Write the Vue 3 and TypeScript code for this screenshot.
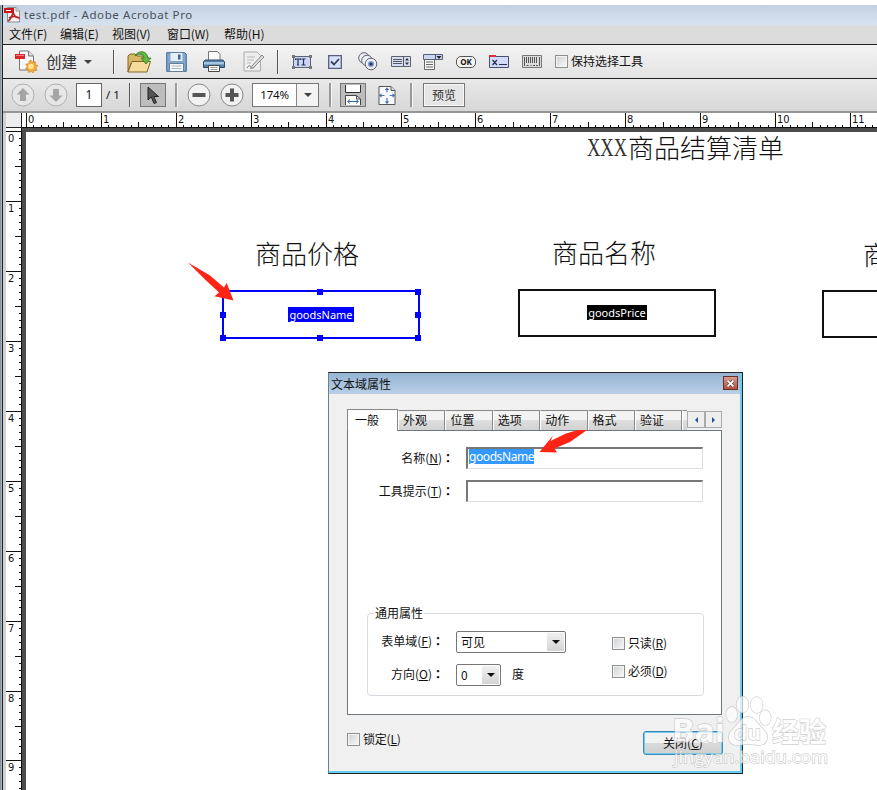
<script setup lang="ts">
interface Tick {
  pos: number
  kind: 'major' | 'half' | 'minor'
  label: string
}

function makeTicks(start: number, inch: number, limit: number): Tick[] {
  const list: Tick[] = []
  for (let i = 0; start + (i * inch) / 10 < limit; i++) {
    list.push({
      pos: Math.floor(start + (i * inch) / 10),
      kind: i % 10 === 0 ? 'major' : i % 5 === 0 ? 'half' : 'minor',
      label: i % 10 === 0 ? String(i / 10) : '',
    })
  }
  return list
}

const hTicks = makeTicks(4.5, 74.9, 855)
const vTicks = makeTicks(3.6, 69.93, 662)
const tickLength = { major: 15, half: 6, minor: 3 }

const menus = ['文件(F)', '编辑(E)', '视图(V)', '窗口(W)', '帮助(H)']
const tabs = ['一般', '外观', '位置', '选项', '动作', '格式', '验证']
const handles = [
  [97, 0], [195, 0],
  [0, 23], [195, 23],
  [0, 46], [97, 46], [195, 46],
]
</script>

<template>
  <div class="window">
    <div class="edge"></div>
    <div class="app">
      <header class="titlebar">
        <svg width="17" height="16" viewBox="0 0 17 16">
          <path d="M3.500 .5h8.500l3.500 3.500v11H3.500z" fill="#f7f2f2" stroke="#8b8b8b" />
          <path d="M12 .5V4h3.500" fill="#ddd" stroke="#999" />
          <path d="M0 1h10v5H0z" fill="#c9161d" />
          <path d="M4 14c3-2 5-6 5-11 0 5 3 8 7 8M5 11c3-2 7-2 10 0" fill="none" stroke="#b92028" stroke-width="1.600" />
          <path d="M2 3.500h5" stroke="#fff" />
        </svg>
        <span>test.pdf - Adobe Acrobat Pro</span>
      </header>
      <nav class="menubar">
        <span v-for="m in menus" :key="m">{{ m }}</span>
      </nav>

      <div class="toolbar main">
        <svg class="create-icon" width="24" height="23" viewBox="0 0 24 23">
          <path d="M4.500 1h9l5 5v14h-14z" fill="#f7f7f7" stroke="#777" />
          <path d="M13.500 1v5h5" fill="#ddd" stroke="#777" />
          <path d="M0 4h10v5H0z" fill="#d8262d" />
          <path d="M1 5h8v1H1z" fill="#ee8588" />
          <path d="M16 10l1.700 2.300 2.800-.6-.2 2.800 2.700 1.200-2 2 1 2.700-2.900.2-1.100 2.400-2-1.700-2.500 1.300-.3-2.800-2.700-.9 1.600-2.300-1.300-2.500 2.900-.4.500-2.700z" fill="#f3a93a" stroke="#c98328" stroke-width=".6" />
          <circle cx="16" cy="16.500" r="2.800" fill="#ffe59a" />
        </svg>
        <span class="create-text">创建</span>
        <i class="caret create-caret"></i>
        <i class="sep s1"></i>
        <svg class="open-icon" width="25" height="22" viewBox="0 0 25 22">
          <path d="M1 5l2-2h5l2 2h10v7H4L1 21z" fill="#d8b765" stroke="#806529" />
          <path d="M1 21L5 10.500h18.500L20 21z" fill="#f6dc9c" stroke="#806529" />
          <path d="M8 5C11-1 20-1 21 7h3l-5 6-5-6h3c0-4-5-5-9-2z" fill="#62b944" stroke="#32761d" stroke-width=".8" />
        </svg>
        <svg class="save-icon" width="21" height="20" viewBox="0 0 21 20">
          <path d="M.7.700h18l1.600 1.600v17H.7z" fill="#7ea7cf" stroke="#426994" />
          <path d="M4.500 1h12v8h-12z" fill="#e6eef6" />
          <path d="M12 2.500h2.500v5H12z" fill="#3f658d" />
          <path d="M3.500 11.500h14v8h-14z" fill="#f5f7f8" stroke="#658099" />
          <path d="M5.500 14h10M5.500 16.500h10" stroke="#aab8c3" />
        </svg>
        <svg class="print-icon" width="22" height="21" viewBox="0 0 22 21">
          <path d="M5.500 10V.5h9l2.500 3v6" fill="#fafafa" stroke="#777" />
          <path d="M2 9h18l1.500 2v5.500H.5V11z" fill="#5580aa" stroke="#304f6c" />
          <path d="M1 11h20v2.500H1z" fill="#a5c6e2" />
          <path d="M5.500 14.500h11v6h-11z" fill="#fff" stroke="#444" />
          <path d="M7.500 16.500h7M7.500 18.500h7" stroke="#999" />
        </svg>
        <svg class="sign-icon" width="22" height="21" viewBox="0 0 22 21">
          <path d="M1 1h13l3.500 3.500V20H1z" fill="#eee" stroke="#aaa" />
          <path d="M4 6h8M4 9h7M4 12h4" stroke="#bbb" />
          <path d="M4 17c2-3 3-3 4-1s3 1 4-1" fill="none" stroke="#777" />
          <path d="M8.500 15.500L19 4l2 2-10.500 10.500-3 1z" fill="#ddd" stroke="#8a8a8a" />
        </svg>
        <i class="sep s2"></i>
        <svg class="tf-icon" width="20" height="14" viewBox="0 0 20 14">
          <path d="M1.500 1.500h17v11h-17z" fill="#cbd5f5" stroke="#5a6178" />
          <path d="M0 0h3v3H0zM17 0h3v3h-3zM0 11h3v3H0zM17 11h3v3h-3z" fill="#777" />
          <path d="M3.500 5V4h5v1M6 4v6M5 10h2M9.500 4h4M9.500 10h4M11.500 4v6" fill="none" stroke="#29304e" stroke-width="1.200" />
        </svg>
        <svg class="cb-icon" width="14" height="14" viewBox="0 0 14 14">
          <path d="M.7.700h12.600v12.600H.7z" fill="#d7e1fb" stroke="#56607c" stroke-width="1.300" />
          <path d="M3 6.500l3 3L11 4" fill="none" stroke="#33405e" stroke-width="1.800" />
        </svg>
        <svg class="radio-icon" width="20" height="19" viewBox="0 0 20 19">
          <g fill="#eceef5" stroke="#62656c" stroke-width="1">
            <circle cx="6" cy="6" r="5.300" /><circle cx="9" cy="8.500" r="5.300" /><circle cx="13" cy="12" r="5.800" />
          </g>
          <circle cx="13" cy="12" r="3" fill="#8198d6" /><circle cx="13" cy="12" r="1.600" fill="#2b3759" />
        </svg>
        <svg class="list-icon" width="20" height="11" viewBox="0 0 20 11">
          <path d="M.5.500h19v10H.5z" fill="#d5dcf4" stroke="#5f6269" />
          <path d="M2 3.500h9M2 5.500h9M2 7.500h9M12.500 1v9" stroke="#55585f" />
          <path d="M14 4.500l2-2.500 2 2.500zM14 6.500L16 9l2-2.500z" fill="#333" />
        </svg>
        <svg class="combo-icon" width="20" height="16" viewBox="0 0 20 16">
          <path d="M1.500 5h10v10.500h-10z" fill="#f8f8f8" stroke="#666" />
          <path d="M.5.500h19v5H.5z" fill="#cbd6f6" stroke="#5c6070" />
          <path d="M12.500 1v4" stroke="#555" /><path d="M13.500 2h5L16 5z" fill="#222" />
          <path d="M3 8h7M3 10.500h7M3 13h7" stroke="#666" />
        </svg>
        <span class="ok-icon">OK</span>
        <svg class="sigfield-icon" width="20" height="13" viewBox="0 0 20 13">
          <path d="M.5 1.500h19v11H.5z" fill="#d0dafa" stroke="#4a506b" />
          <path d="M0 0h7v2H0z" fill="#e02e35" />
          <path d="M3.500 5l4.500 5M8 5l-4.500 5M10 9.500h8" stroke="#28304e" stroke-width="1.200" />
        </svg>
        <svg class="bar-icon" width="20" height="13" viewBox="0 0 20 13">
          <path d="M.5.500h19v12H.5z" fill="#dcdcdc" stroke="#777" />
          <path d="M2.500 2v9M4.500 2v6M6.500 2v6M8.500 2v6M10.500 2v6M12.500 2v6M14.500 2v6M17.500 2v9M4.500 10.500h2M8.500 10.500h1M11 10.500h2M14 10.500h2" stroke="#555" />
        </svg>
        <i class="check keep-check"></i>
        <span class="keep-text">保持选择工具</span>
      </div>

      <div class="toolbar nav">
        <svg class="round up" width="24" height="24" viewBox="0 0 24 24">
          <circle cx="12" cy="12" r="11" fill="#e7e7e7" stroke="#b1b1b1" />
          <path d="M12 5l6.500 6.500H15V18H9v-6.500H5.500z" fill="#a5a5a5" />
        </svg>
        <svg class="round down" width="24" height="24" viewBox="0 0 24 24">
          <circle cx="12" cy="12" r="11" fill="#e7e7e7" stroke="#b1b1b1" />
          <path d="M12 19l6.500-6.500H15V6H9v6.500H5.500z" fill="#a5a5a5" />
        </svg>
        <span class="page-no">1</span>
        <span class="page-total">/ 1</span>
        <i class="sep n1"></i>
        <span class="tool-on arrow-tool">
          <svg width="14" height="19" viewBox="0 0 14 19">
            <path d="M2 1v13l3.300-3 2.700 6.500 2.500-1-2.700-6h4.700z" fill="#555" stroke="#222" />
          </svg>
        </span>
        <i class="sep thick n2"></i>
        <svg class="round minus" width="24" height="24" viewBox="0 0 24 24">
          <circle cx="12" cy="12" r="11" fill="#f2f2f2" stroke="#888" /><path d="M5.500 10h13v4h-13z" fill="#555" />
        </svg>
        <svg class="round plus" width="24" height="24" viewBox="0 0 24 24">
          <circle cx="12" cy="12" r="11" fill="#f2f2f2" stroke="#888" />
          <path d="M10 5.500h4V10h4.500v4H14v4.500h-4V14H5.500v-4H10z" fill="#555" />
        </svg>
        <span class="zoom"><b>174%</b><em><i class="caret"></i></em></span>
        <i class="sep thick n3"></i>
        <span class="tool-on fit-tool">
          <svg width="18" height="20" viewBox="0 0 18 20">
            <path d="M1.500 0v7.500h15V0" fill="#fff" stroke="#333" />
            <path d="M1.500 20V10.500h11l4 3.500v6" fill="#fff" stroke="#444" />
            <path d="M12.500 10.500V14h4" fill="none" stroke="#555" />
            <path d="M4 16.500h10M6 14.500l-2.500 2L6 18.500M12 14.500l2.500 2-2.500 2" fill="none" stroke="#416b9e" />
          </svg>
        </span>
        <svg class="fitpage" width="18" height="19" viewBox="0 0 18 19">
          <path d="M1 .5h12l4 4v14H1z" fill="#f8fafc" stroke="#555" />
          <path d="M13 .5v4h4" fill="#ddd" stroke="#555" />
          <path d="M9 2.500v4M9 12v5M1.500 9.500h5M11.500 9.500h5" stroke="#4d7cb6" stroke-width="1.200" />
          <path d="M9 1.500l2.300 2.500H6.700zM9 18l2.300-2.500H6.700zM1 9.500L3.500 7.200v4.600zM17 9.500L14.500 7.200v4.600z" fill="#416fa9" />
        </svg>
        <i class="sep thick n4"></i>
        <span class="preview">预览</span>
      </div>

      <div class="workspace">
        <div class="corner"></div>
        <svg class="hruler" width="855" height="15" shape-rendering="crispEdges">
          <g v-for="t in hTicks" :key="t.pos">
            <rect :x="t.pos" :y="15 - tickLength[t.kind]" width="1" :height="tickLength[t.kind]" fill="#111" />
            <text v-if="t.label" :x="t.pos + 2" y="9.500">{{ t.label }}</text>
          </g>
        </svg>
        <svg class="vruler" width="15" height="662" shape-rendering="crispEdges">
          <g v-for="t in vTicks" :key="t.pos">
            <rect :x="15 - (t.kind === 'minor' ? 2 : tickLength[t.kind])" :y="t.pos" :width="t.kind === 'minor' ? 2 : tickLength[t.kind]" height="1" fill="#111" />
            <text v-if="t.label" x="2" :y="t.pos + 11">{{ t.label }}</text>
          </g>
        </svg>
        <main class="page">
          <h1 class="doc-title"><span class="xxx">XXX</span><span class="title-cjk">商品结算清单</span></h1>
          <div class="heading h-price">商品价格</div>
          <div class="heading h-name">商品名称</div>
          <div class="heading h-third">商</div>
          <div class="field selected">
            <span>goodsName</span>
            <i v-for="[x, y] in handles" :key="x + '-' + y" class="handle" :style="{ left: x - 4 + 'px', top: y - 3 + 'px' }"></i>
          </div>
          <div class="field second"><span>goodsPrice</span></div>
          <div class="field third"></div>
        </main>
      </div>
    </div>

    <section class="dialog">
      <div class="dialog-title"><span>文本域属性</span><i class="close"><svg width="9" height="7" viewBox="0 0 9 7"><path d="M1.500.500l6 6M7.500.500l-6 6" stroke="#4a3434" stroke-width="3" /><path d="M1.500.500l6 6M7.500.500l-6 6" stroke="#fff" stroke-width="1.800" /></svg></i></div>
      <div class="dialog-body">
        <div class="tabs">
          <span v-for="(t, i) in tabs" :key="t" class="tab" :class="{ active: i === 0 }">{{ t }}</span>
          <span class="tab stub"></span>
          <span class="scroll"><svg width="5" height="6"><path d="M4 0v6L1 3z" fill="#2c4e98" /></svg></span>
          <span class="scroll"><svg width="5" height="6"><path d="M1 0v6l3-3z" fill="#2c4e98" /></svg></span>
        </div>
        <div class="panel">
          <label class="row"><span>名称(<u>N</u>)<s>：</s></span><span class="input"><mark>goodsName</mark></span></label>
          <label class="row"><span>工具提示(<u>T</u>)<s>：</s></span><span class="input"></span></label>
          <div class="group">
            <span class="legend">通用属性</span>
            <div class="group-left">
              <div class="grow"><span class="glabel">表单域(<u>F</u>)<s>：</s></span><span class="select wide">可见<em><i class="caret black"></i></em></span></div>
              <div class="grow"><span class="glabel">方向(<u>O</u>)<s>：</s></span><span class="select">0<em><i class="caret black"></i></em></span><span class="deg">度</span></div>
            </div>
            <div class="group-right">
              <span class="option"><i class="check"></i>只读(<u>R</u>)</span>
              <span class="option"><i class="check"></i>必须(<u>D</u>)</span>
            </div>
          </div>
        </div>
        <footer class="dialog-foot">
          <span class="option"><i class="check"></i>锁定(<u>L</u>)</span>
          <button type="button">关闭(<u>C</u>)</button>
        </footer>
      </div>
    </section>

    <svg class="overlay" width="877" height="790" viewBox="0 0 877 790">
      <path d="M188 262.500L210 275.500L224 287.500L226.700 283L233.500 300.500L214.500 296.300L219 292.500L204.500 279Z" fill="#ff2416" />
      <path d="M593.500 425.500L566 433.500L550.500 441L553 435.500L539.500 452L557 452.500L554.500 448.500L570 442Z" fill="#ff2416" />
      <g class="watermark">
        <text x="672" y="742" font-size="33" font-weight="700" textLength="53" lengthAdjust="spacingAndGlyphs">Bai</text>
        <ellipse cx="731.700" cy="714.500" rx="5.500" ry="7.500" />
        <ellipse cx="742.500" cy="704.500" rx="6" ry="8" />
        <ellipse cx="756.700" cy="705" rx="6" ry="8" />
        <ellipse cx="765.300" cy="717.700" rx="5.500" ry="7.500" />
        <path d="M748 717c-8 0-9 7-15 12-7 6-5 16 4 16 5 0 7-1 11-1s7 1 11 1c9 0 11-10 4-16-6-5-7-12-15-12z" />
        <text x="734" y="740" font-size="20" font-weight="700" textLength="27" lengthAdjust="spacingAndGlyphs">du</text>
        <text x="772" y="742" font-size="27" font-weight="700" textLength="54" lengthAdjust="spacingAndGlyphs">经验</text>
        <text x="674" y="763" font-size="17" textLength="154" lengthAdjust="spacingAndGlyphs">jingyan.baidu.com</text>
      </g>
    </svg>
  </div>
</template>

<style>
body { margin: 0; overflow: hidden; background: #fff; }
</style>

<style scoped>
* { box-sizing: border-box; }
i, em, b { font-style: normal; font-weight: 400; }
s { text-decoration: none; font-family: "Noto Sans CJK TC", sans-serif; font-weight: 700; }
.window {
  position: relative; display: flex; width: 877px; height: 790px; padding-top: 5px; overflow: hidden;
  font: 12px/16px "Noto Sans CJK SC", sans-serif; color: #111; white-space: nowrap;
}
.edge { width: 3px; flex: none; background: linear-gradient(90deg, #8995a1 0 1px, #a9b3bd 1px 2px, #202224 2px); }
.app { flex: 1; min-width: 0; display: flex; flex-direction: column; background: #d0d1d1; }
svg { display: block; flex: none; }

.titlebar { display: flex; align-items: center; height: 20px; padding-left: 1px; gap: 3px; background: linear-gradient(#c2d1e2, #d5e2f0); color: #4a525c; }
.titlebar span { font: 11.500px/18px "Noto Sans", sans-serif; letter-spacing: .58px; }
.menubar { display: grid; grid-template-columns: 51px 52px 55px 57px auto; height: 19px; background: #dcdcdc; line-height: 18px; padding-left: 6px; }
.menubar span { letter-spacing: -.1px; }
.toolbar { display: flex; align-items: center; flex: none; }
.main { height: 34px; border-top: 1px solid #222; background: linear-gradient(#f3f3f3, #e3e3e3); }
.nav { height: 35px; border-top: 1px solid #222; border-bottom: 2px solid #969696; background: linear-gradient(#e9e9e9, #d7d7d7); }
.caret { display: block; width: 0; height: 0; border: 4px solid transparent; border-top-color: #444; border-bottom: 0; }
.caret.black { border-top-color: #111; }
.sep { width: 1px; height: 24px; background: #555; box-shadow: 1px 0 #f5f5f5; flex: none; }
.sep.thick { width: 2px; background: #999; }
.create-icon { margin-left: 12px; }
.create-text { margin: -2px 0 0 7px; font-size: 15.500px; color: #333; }
.create-caret { margin-left: 7px; }
.s1 { margin-left: 21px; }
.open-icon { margin-left: 13px; }
.save-icon { margin-left: 14px; }
.print-icon { margin-left: 16px; }
.sign-icon { margin-left: 18px; }
.s2 { margin-left: 12px; }
.tf-icon { margin-left: 14px; }
.cb-icon { margin-left: 16px; }
.radio-icon { margin-left: 16px; }
.list-icon { margin-left: 13px; }
.combo-icon { margin-left: 12px; }
.ok-icon { width: 20px; height: 12px; margin-left: 13px; border: 1px solid #555; border-radius: 5px; font: 700 8px/10px "Open Sans", sans-serif; text-align: center; background: #f5f5f5; }
.sigfield-icon { margin-left: 13px; }
.bar-icon { margin-left: 13px; }
.check { display: block; width: 13px; height: 13px; flex: none; border: 1px solid #8e8f8f; background: linear-gradient(135deg, #cdd0d3, #fafafa); box-shadow: inset 0 0 0 1px #f4f4f4; }
.keep-check { margin-left: 13px; }
.keep-text { margin: -1px 0 0 3px; }

.up { margin-left: 8px; }
.down { margin-left: 9px; }
.page-no { width: 26px; height: 24px; margin-left: 8px; border: 1px solid #666; background: #fff; text-align: center; line-height: 22px; font-family: "Noto Sans", sans-serif; }
.page-total { margin-left: 4px; width: 15px; font-family: "Noto Sans", sans-serif; font-size: 11.500px; }
.n1 { margin-left: 8px; }
.tool-on { display: flex; align-items: center; justify-content: center; width: 26px; height: 24px; border: 1px solid #777; background: #bdbdbd; }
.arrow-tool { margin-left: 10px; }
.n2 { margin-left: 9px; }
.minus { margin-left: 10px; }
.plus { margin-left: 9px; }
.zoom { display: flex; width: 67px; height: 24px; margin-left: 8px; border: 1px solid #777; background: #fff; }
.zoom b { flex: 1; text-align: center; font: 11.500px/22px "Noto Sans", sans-serif; letter-spacing: -.2px; }
.zoom em { display: flex; align-items: center; justify-content: center; width: 22px; border-left: 1px solid #888; background: #f3f3f3; }
.n3 { margin-left: 10px; }
.fit-tool { margin-left: 9px; }
.fitpage { margin-left: 12px; }
.n4 { margin-left: 14px; }
.preview { width: 42px; height: 24px; margin-left: 11px; border: 1px solid #777; box-shadow: inset 0 0 0 1px #f8f8f8; background: #e6e6e6; text-align: center; line-height: 21px; color: #333; }

.workspace { flex: 1; display: grid; grid-template-columns: 16px 1fr; grid-template-rows: 15px 1fr; margin-left: 3px; background: #4d4d4d; }
.corner { background: #ededed; border-right: 1px solid #222; border-bottom: 1px solid #222; }
.hruler { background: #fff; border-bottom: 1px solid #111; overflow: visible; }
.vruler { background: #fff; border-right: 1px solid #111; width: 16px; overflow: visible; }
.hruler text, .vruler text { font: 11px "DejaVu Sans Condensed", "DejaVu Sans", sans-serif; fill: #111; }
.page { position: relative; margin: 4px 0 0 4px; background: #fff; overflow: hidden; }
.doc-title { position: absolute; left: 561px; top: 0; display: flex; margin: 0; font: 300 26px/32px "Noto Sans CJK SC", sans-serif; color: #111; }
.xxx { width: 41px; font-family: "Liberation Serif", serif; font-weight: 400; color: #333; transform: scaleX(.71); transform-origin: left; }
.title-cjk { margin-top: -1px; }
.heading { position: absolute; font: 300 26px/36px "Noto Sans CJK SC", sans-serif; color: #111; }
.h-price { left: 229px; top: 103px; }
.h-name { left: 526px; top: 102px; }
.h-third { left: 837px; top: 104px; }
.field { position: absolute; width: 198px; height: 48px; display: flex; align-items: center; justify-content: center; border: 2px solid #111; }
.field span { background: #000; color: #fff; padding: 0 1px; font: 11px/15px "Noto Sans", sans-serif; }
.second { left: 492px; top: 157px; }
.second span { margin-bottom: 1px; }
.third { left: 796px; top: 158px; }
.selected { left: 196px; top: 158px; height: 49px; border-color: #00f; }
.selected span { background: #00f; }
.handle { position: absolute; width: 6px; height: 6px; background: #00f; }

.dialog { position: absolute; left: 328px; top: 372px; width: 415px; height: 402px; border: 1px solid #222; border-left-color: #6a7f90; background: #f0f0f0; box-shadow: inset -2px -2px #65cdf0; display: flex; flex-direction: column; }
.dialog-title { display: flex; height: 21px; margin-right: 2px; justify-content: space-between; padding: 1px 2px 0; background: linear-gradient(#96b4d4, #b9cfe6); line-height: 19px; }
.close { display: flex; align-items: center; justify-content: center; width: 15px; height: 14px; margin-top: 2px; border: 1px solid #642f2a; background: linear-gradient(#d99a8f, #b54d3d); }
.dialog-body { padding: 15px 20px 0 18px; }
.tabs { display: flex; align-items: flex-end; height: 22px; width: 375px; position: relative; z-index: 1; margin-bottom: -1px; }
.tab { width: 47.400px; height: 20px; margin-bottom: 1px; border: 1px solid #888; border-left-color: #fff; border-bottom: 0; background: linear-gradient(#f3f3f3 0 48%, #dedede 50%, #d2d2d2); padding-left: 4px; line-height: 18px; }
.tab.active { width: 51px; height: 22px; margin: 0; border-left-color: #888; background: #fff; padding-left: 7px; line-height: 19px; }
.tab.stub { width: 5px; padding: 0; border-right: 0; }
.scroll { flex: 1; display: flex; align-items: center; justify-content: center; height: 17px; margin-bottom: 3px; border: 1px solid #aaa; background: #eee; }
.panel { width: 375px; height: 285px; border: 1px solid #6f777e; background: #fff; padding: 16px 18px 0 19px; display: flex; flex-direction: column; }
.row { display: grid; grid-template-columns: 99px 237px; height: 22px; margin-bottom: 11px; }
.row > span:first-child { text-align: right; padding-right: 12px; line-height: 22px; }
.input { border: 1px solid #ddd; border-top: 2px solid #777; border-left: 2px solid #777; padding: 0 1px; display: flex; align-items: flex-start; }
mark { background: #3399ff; color: #fff; font: 12px/15px "Noto Sans", sans-serif; letter-spacing: -.42px; }
.group { position: relative; display: flex; justify-content: space-between; width: 337px; height: 83px; margin-top: 100px; border: 1px solid #d7dbe0; border-radius: 4px; padding: 17px 0 0 0; }
.legend { position: absolute; left: 6px; top: -9px; padding: 0 1px; background: #fff; }
.group-left { display: flex; flex-direction: column; gap: 11px; }
.grow { display: flex; height: 22px; align-items: center; }
.glabel { width: 88px; margin-top: -2px; padding-right: 12px; text-align: right; }
.select { display: flex; justify-content: space-between; width: 45px; height: 22px; border: 1px solid #777; border-radius: 2px; padding: 1px 1px 1px 4px; line-height: 17px; }
.select.wide { width: 110px; }
.select em { width: 17px; display: flex; align-items: center; justify-content: center; background: linear-gradient(#f0f0f0, #d4d4d4); }
.deg { margin: -2px 0 0 11px; }
.group-right { width: 91px; display: flex; flex-direction: column; gap: 12px; padding-top: 4px; }
.option { display: flex; align-items: center; height: 16px; letter-spacing: -.2px; }
.option .check { margin-right: 3px; }
.dialog-foot { display: flex; justify-content: space-between; padding-top: 16px; width: 376px; }
button { width: 80px; height: 24px; padding: 0; border: 1px solid #3b88b5; border-radius: 3px; box-shadow: inset 0 0 0 1px #73cdf0; background: linear-gradient(#f2f2f2 48%, #dadada 50%, #d0d0d0); font: 12px/20px "Noto Sans CJK SC", sans-serif; color: #111; }

.overlay { position: absolute; left: 0; top: 0; pointer-events: none; }
.watermark { opacity: .72; fill: #fff; stroke: #bdbdbd; stroke-width: 1.300; paint-order: stroke; font-family: "Open Sans", "Noto Sans CJK SC", sans-serif; }
</style>
